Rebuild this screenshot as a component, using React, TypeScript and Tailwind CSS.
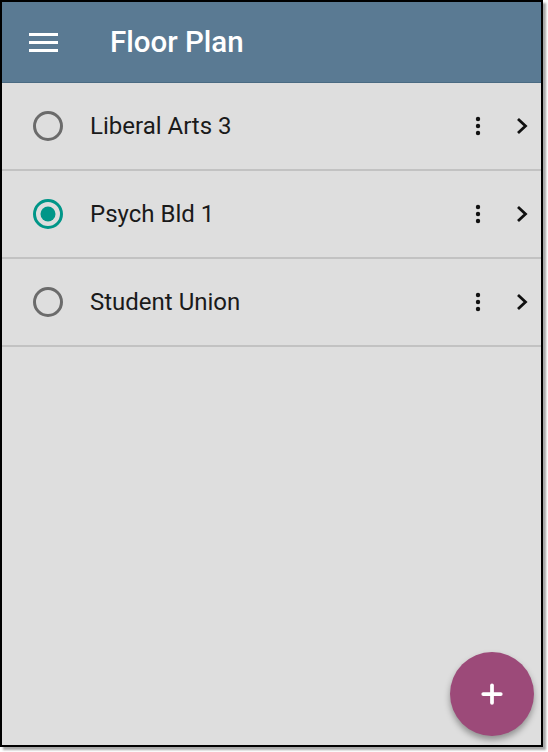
import { Plus } from "lucide-react";

const plans = [
  { name: "Liberal Arts 3", selected: false },
  { name: "Psych Bld 1", selected: true },
  { name: "Student Union", selected: false },
];

function Radio({ on }: { on: boolean }) {
  return (
    <svg width="32" height="32" viewBox="0 0 32 32">
      <circle cx="16" cy="16" r="13.5" fill="none" stroke={on ? "#009688" : "#6b6b6b"} strokeWidth="3" />
      {on && <circle cx="16" cy="16" r="7.5" fill="#009688" />}
    </svg>
  );
}

function Dots() {
  return (
    <svg width="8" height="20" viewBox="0 0 8 20">
      <circle cx="4" cy="3" r="2.2" fill="#111" />
      <circle cx="4" cy="10" r="2.2" fill="#111" />
      <circle cx="4" cy="17" r="2.2" fill="#111" />
    </svg>
  );
}

function Chevron() {
  return (
    <svg width="12" height="18" viewBox="0 0 12 18">
      <path d="M2 2 L9.5 9 L2 16" fill="none" stroke="#111" strokeWidth="2.8" />
    </svg>
  );
}

export default function App() {
  return (
    <div className="w-[548px] h-[752px] bg-white" style={{ fontFamily: "Roboto, 'Liberation Sans', sans-serif" }}>
      <div className="relative w-[543px] h-[747px] border-2 border-black bg-[#dedede] shadow-[3px_3px_2px_rgba(0,0,0,0.35)] flex flex-col">
        <header className="h-[81px] bg-[#5a7a93] border-b border-[#4a6a82] flex items-center shrink-0">
          <svg className="ml-[27px]" width="30" height="20" viewBox="0 0 30 20">
            <rect x="0" y="1" width="29" height="3" fill="#fff" />
            <rect x="0" y="9" width="29" height="3" fill="#fff" />
            <rect x="0" y="17" width="29" height="3" fill="#fff" />
          </svg>
          <h1 className="ml-[51px] text-white text-[29.5px] font-medium">Floor Plan</h1>
        </header>
        <ul>
          {plans.map((p) => (
            <li key={p.name} className="h-[88px] border-b-2 border-[#c2c2c2] flex items-center">
              <div className="ml-[30px] flex items-center">
                <Radio on={p.selected} />
              </div>
              <span className="ml-[26px] text-[24px] text-[#1a1a1a] flex-1">{p.name}</span>
              <div className="mr-[34px]">
                <Dots />
              </div>
              <div className="mr-[13px]">
                <Chevron />
              </div>
            </li>
          ))}
        </ul>
        <button className="absolute right-[7px] bottom-[9px] w-[84px] h-[84px] rounded-full bg-[#9c4a79] flex items-center justify-center shadow-[0_4px_6px_rgba(0,0,0,0.35)]">
          <Plus className="text-white" size={30} strokeWidth={3} />
        </button>
      </div>
    </div>
  );
}
